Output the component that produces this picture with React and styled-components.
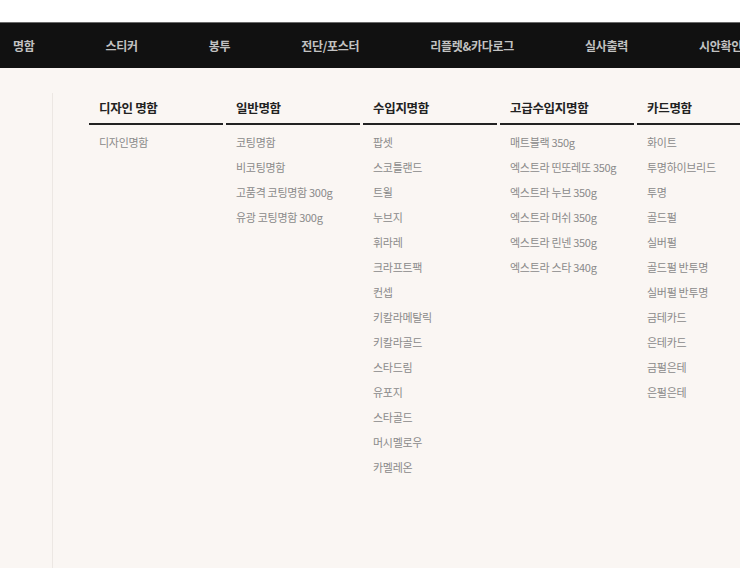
import React from 'react'
import styled, { createGlobalStyle } from 'styled-components'

const GlobalStyle = createGlobalStyle`
  html, body {
    margin: 0;
    padding: 0;
    background: #faf6f3;
    font-family: "Noto Sans CJK KR", "Noto Sans", sans-serif;
  }
`

const navItems = ['명함', '스티커', '봉투', '전단/포스터', '리플렛&카다로그', '실사출력', '시안확인']

const columns = [
  { title: '디자인 명함', items: ['디자인명함'] },
  {
    title: '일반명함',
    items: ['코팅명함', '비코팅명함', '고품격 코팅명함 300g', '유광 코팅명함 300g'],
  },
  {
    title: '수입지명함',
    items: [
      '팝셋',
      '스코틀랜드',
      '트윌',
      '누브지',
      '휘라레',
      '크라프트팩',
      '컨셉',
      '키칼라메탈릭',
      '키칼라골드',
      '스타드림',
      '유포지',
      '스타골드',
      '머시멜로우',
      '카멜레온',
    ],
  },
  {
    title: '고급수입지명함',
    items: [
      '매트블랙 350g',
      '엑스트라 띤또레또 350g',
      '엑스트라 누브 350g',
      '엑스트라 머쉬 350g',
      '엑스트라 린넨 350g',
      '엑스트라 스타 340g',
    ],
  },
  {
    title: '카드명함',
    items: [
      '화이트',
      '투명하이브리드',
      '투명',
      '골드펄',
      '실버펄',
      '골드펄 반투명',
      '실버펄 반투명',
      '금테카드',
      '은테카드',
      '금펄은테',
      '은펄은테',
    ],
  },
]

const App = () => {
  return (
    <Page>
      <GlobalStyle />
      <TopBand />
      <NavBar>
        {navItems.map((item) => (
          <NavItem key={item}>{item}</NavItem>
        ))}
      </NavBar>
      <Content>
        <Side />
        <Columns>
          {columns.map((col) => (
            <Column key={col.title}>
              <ColumnTitle>{col.title}</ColumnTitle>
              <ItemList>
                {col.items.map((item) => (
                  <Item key={item}>{item}</Item>
                ))}
              </ItemList>
            </Column>
          ))}
        </Columns>
      </Content>
    </Page>
  )
}

const Page = styled.div`
  width: 740px;
  height: 568px;
  overflow: hidden;
  display: flex;
  flex-direction: column;
  background: #faf6f3;
`

const TopBand = styled.div`
  height: 22px;
  background: #fff;
  flex-shrink: 0;
`

const NavBar = styled.nav`
  flex-shrink: 0;
  height: 45px;
  background: #111;
  border-top: 1px solid #6a6a6a;
  display: flex;
  align-items: center;
  gap: 71px;
  padding-left: 13px;
  white-space: nowrap;
`

const NavItem = styled.span`
  color: #c2c2c2;
  font-size: 12px;
  font-weight: 700;
  letter-spacing: -0.3px;
  flex-shrink: 0;
`

const Content = styled.div`
  flex: 1;
  display: flex;
  padding-top: 25px;
`

const Side = styled.div`
  width: 52px;
  flex-shrink: 0;
  border-right: 1px solid #ece7e3;
`

const Columns = styled.div`
  display: flex;
  gap: 3px;
  padding-left: 36px;
`

const Column = styled.div`
  width: 134px;
  flex-shrink: 0;
`

const ColumnTitle = styled.div`
  height: 30px;
  line-height: 30px;
  padding-left: 10px;
  font-size: 12.5px;
  font-weight: 700;
  color: #222;
  letter-spacing: -0.3px;
  border-bottom: 2px solid #222;
  white-space: nowrap;
`

const ItemList = styled.ul`
  list-style: none;
  margin: 0;
  padding: 5px 0 0 10px;
`

const Item = styled.li`
  line-height: 25px;
  font-size: 11px;
  color: #8a8a8a;
  letter-spacing: -0.3px;
  white-space: nowrap;
`

export default App
